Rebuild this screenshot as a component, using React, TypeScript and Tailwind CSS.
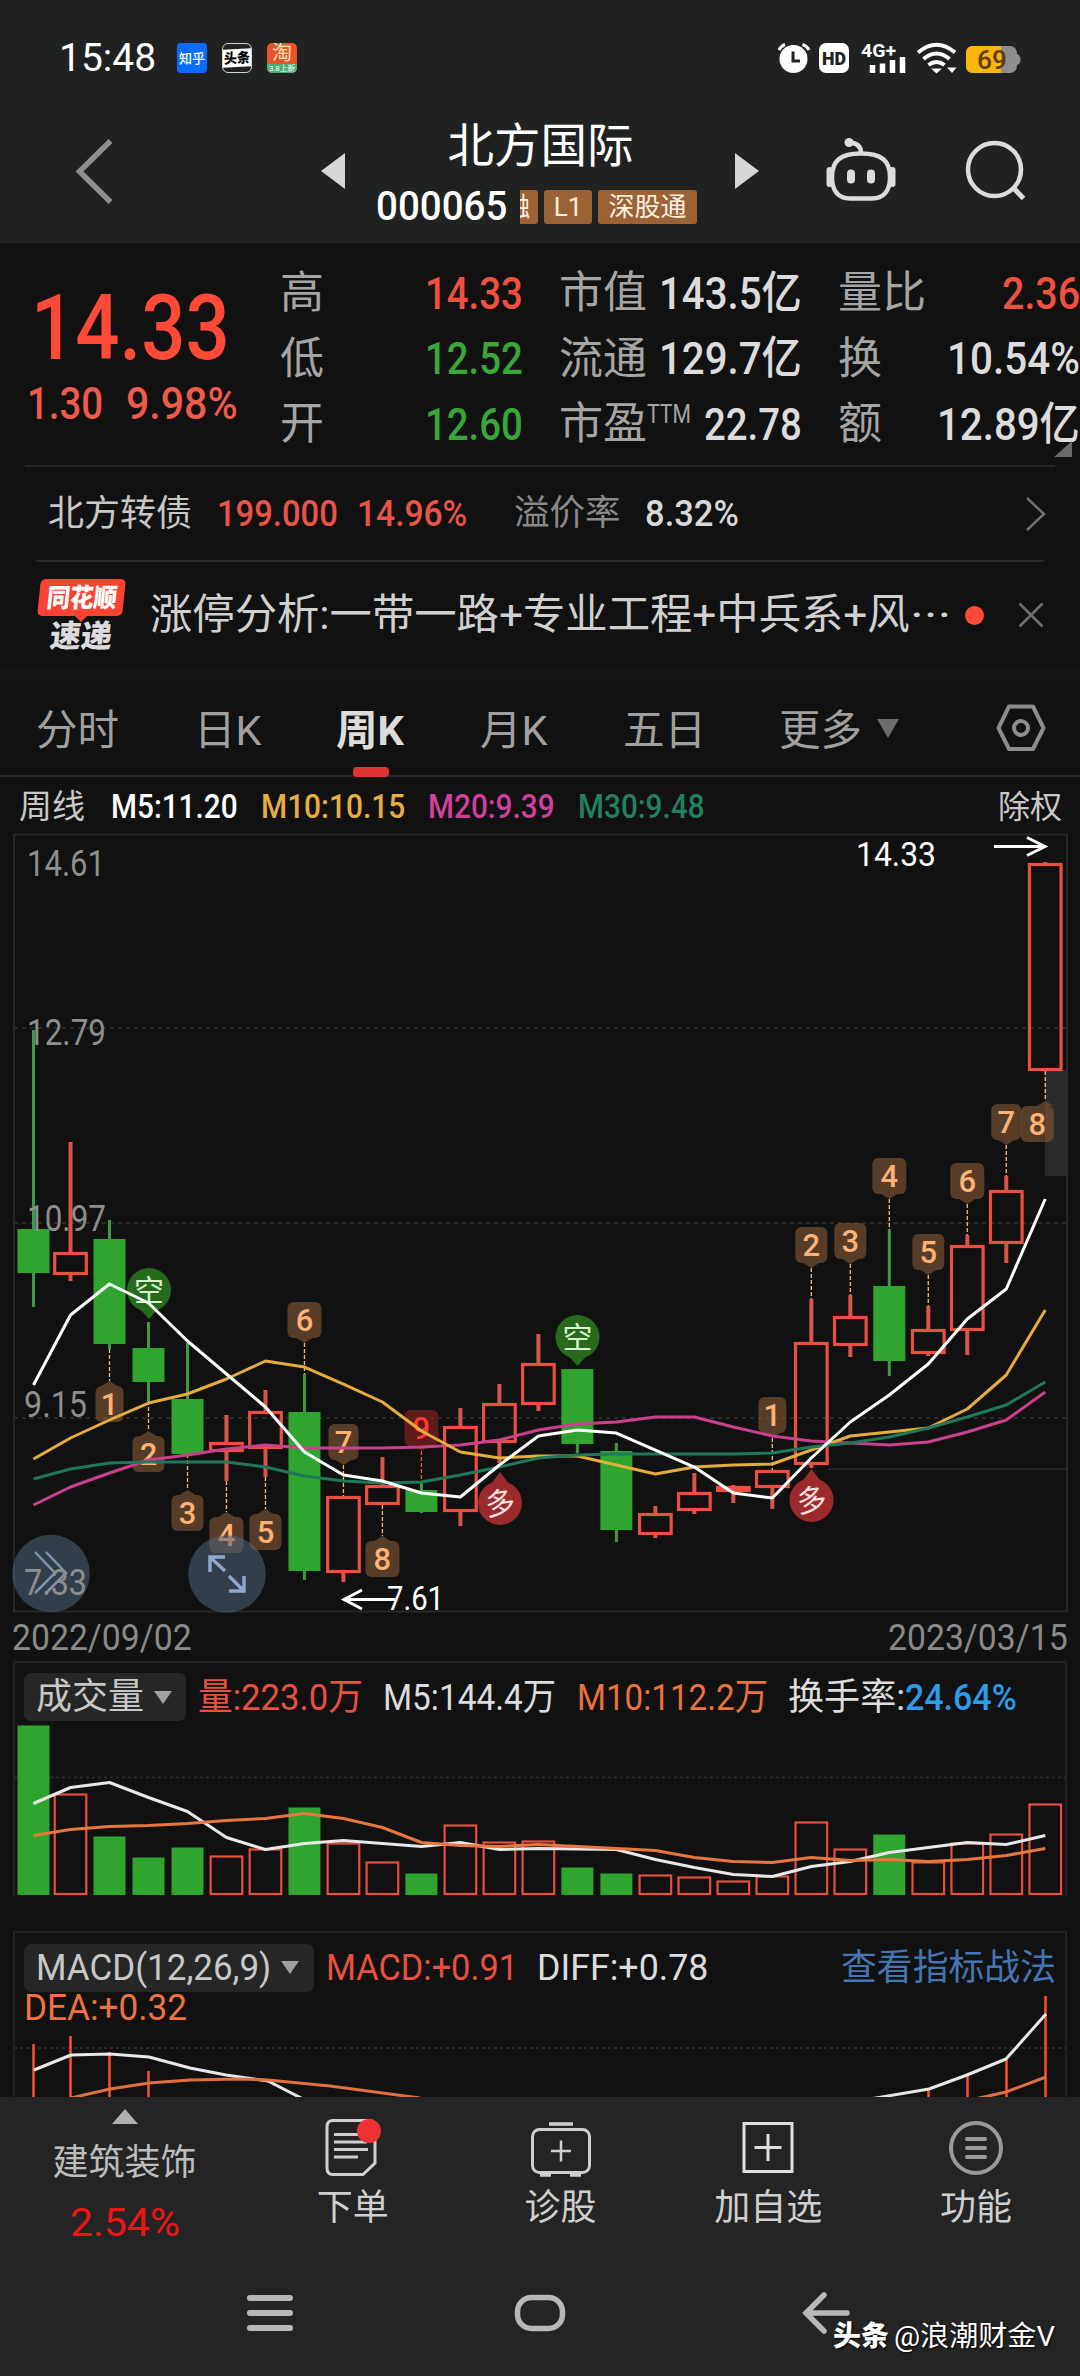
import { useLayoutEffect, useRef, type ReactNode } from 'react'

// Scales a single line of text horizontally so that it fills exactly `w` pixels
function Fit({ w, className = '', children }: { w: number; className?: string; children: ReactNode }) {
  const ref = useRef<HTMLSpanElement>(null)

  useLayoutEffect(() => {
    const el = ref.current
    if (!el) return
    el.style.transform = `scaleX(${w / el.offsetWidth})`
  }, [w, children])

  return (
    <span className={`inline-flex shrink-0 items-center ${className}`} style={{ width: w }}>
      <span ref={ref} className="inline-block origin-left whitespace-nowrap">
        {children}
      </span>
    </span>
  )
}

type Candle = { up: boolean; high: number; top: number; bottom: number; low: number; vol: number }

// [up, high, body top, body bottom, low, volume top]
const raw: [number, number, number, number, number, number][] = [
  [0, 1030, 1229, 1273, 1307, 1726],
  [1, 1142, 1252, 1275, 1281, 1794],
  [0, 1220, 1239, 1344, 1349, 1837],
  [0, 1322, 1348, 1382, 1401, 1858],
  [0, 1343, 1399, 1454, 1454, 1848],
  [1, 1415, 1442, 1452, 1481, 1856],
  [1, 1390, 1411, 1449, 1477, 1849],
  [0, 1374, 1412, 1571, 1580, 1808],
  [1, 1496, 1496, 1573, 1582, 1843],
  [1, 1457, 1485, 1505, 1505, 1862],
  [0, 1483, 1490, 1512, 1513, 1874],
  [1, 1408, 1426, 1512, 1526, 1825],
  [1, 1384, 1403, 1443, 1463, 1842],
  [1, 1334, 1363, 1405, 1411, 1841],
  [0, 1369, 1369, 1444, 1453, 1868],
  [0, 1443, 1451, 1530, 1542, 1874],
  [1, 1506, 1513, 1535, 1538, 1875],
  [1, 1473, 1492, 1511, 1514, 1877],
  [1, 1485, 1486, 1492, 1503, 1881],
  [1, 1470, 1470, 1488, 1509, 1876],
  [1, 1299, 1342, 1465, 1468, 1822],
  [1, 1295, 1316, 1346, 1357, 1849],
  [0, 1230, 1286, 1361, 1376, 1835],
  [1, 1306, 1329, 1354, 1356, 1862],
  [1, 1235, 1245, 1331, 1355, 1843],
  [1, 1176, 1190, 1244, 1263, 1834],
  [1, 862, 863, 1071, 1071, 1804],
]

const candles: Candle[] = raw.map(([up, high, top, bottom, low, vol]) => ({ up: up === 1, high, top, bottom, low, vol }))

const cx = (i: number) => (i === 0 ? 33.5 : 109.5 + 38.99 * (i - 2))

const line = (ys: number[]) => ys.map((y, i) => `${cx(i)},${y}`).join(' ')

const ma5 = [1385, 1315, 1284, 1303, 1341, 1374, 1407, 1452, 1475, 1481, 1493, 1497, 1465, 1436, 1430, 1433, 1450, 1467, 1493, 1498, 1458, 1422, 1395, 1364, 1319, 1289, 1199]
const ma10 = [1459, 1438, 1420, 1403, 1394, 1379, 1361, 1367, 1384, 1402, 1431, 1452, 1458, 1456, 1456, 1465, 1474, 1467, 1465, 1464, 1450, 1436, 1432, 1428, 1409, 1375, 1310]
const ma20 = [1505, 1487, 1473, 1460, 1455, 1449, 1445, 1448, 1448, 1448, 1447, 1445, 1440, 1430, 1424, 1422, 1417, 1417, 1427, 1436, 1441, 1443, 1445, 1442, 1432, 1420, 1392]
const ma30 = [1479, 1469, 1463, 1462, 1462, 1462, 1467, 1476, 1481, 1483, 1482, 1475, 1467, 1458, 1455, 1454, 1454, 1454, 1454, 1453, 1447, 1443, 1437, 1428, 1417, 1405, 1382]
const vol5 = [1804, 1788, 1783, 1798, 1812, 1838, 1850, 1844, 1841, 1844, 1847, 1843, 1850, 1849, 1849.5, 1850, 1860, 1868, 1875, 1877, 1867, 1862, 1853, 1848, 1843, 1845, 1836]
const vol10 = [1836, 1830, 1827, 1826, 1824, 1821, 1819, 1814, 1819, 1828, 1843, 1846, 1847, 1845, 1847, 1849, 1851, 1858, 1862, 1863, 1858, 1861, 1860, 1862, 1860, 1856, 1849]

type Badge = { n: string; i: number; y: number; wick: number; below?: boolean; w?: number; dx?: number; hot?: boolean }

const badges: Badge[] = [
  { n: '1', i: 2, y: 1386, wick: 1349, below: true, w: 28 },
  { n: '2', i: 3, y: 1436, wick: 1401, below: true },
  { n: '3', i: 4, y: 1495, wick: 1454, below: true },
  { n: '4', i: 5, y: 1517, wick: 1481, below: true, w: 34 },
  { n: '5', i: 6, y: 1514, wick: 1477, below: true },
  { n: '6', i: 7, y: 1302, wick: 1374, w: 34 },
  { n: '7', i: 8, y: 1424, wick: 1496, w: 30 },
  { n: '8', i: 9, y: 1541, wick: 1505, below: true, w: 34 },
  { n: '9', i: 10, y: 1410, wick: 1483, w: 34, hot: true },
  { n: '1', i: 19, y: 1397, wick: 1470, w: 28 },
  { n: '2', i: 20, y: 1227, wick: 1299 },
  { n: '3', i: 21, y: 1223, wick: 1295 },
  { n: '4', i: 22, y: 1158, wick: 1230, w: 34 },
  { n: '5', i: 23, y: 1234, wick: 1306 },
  { n: '6', i: 24, y: 1163, wick: 1235, w: 34 },
  { n: '7', i: 25, y: 1104, wick: 1176, w: 30 },
  { n: '8', i: 26, y: 1106, wick: 1071, below: true, w: 33, dx: -8 },
]

function CountBadge({ n, i, y, wick, below, w = 32, dx = 0, hot }: Badge) {
  const x = cx(i)
  const fill = hot ? '#8a2020' : '#7d5535'
  const tip = below
    ? `M${x - 8} ${y} L${x} ${y - 5} L${x + 8} ${y} Z`
    : `M${x - 8} ${y + 36} L${x} ${y + 41} L${x + 8} ${y + 36} Z`
  return (
    <g>
      <line x1={x} x2={x} y1={below ? wick : y + 41} y2={below ? y - 5 : wick} stroke={hot ? '#e0604a' : '#f2b98a'} strokeWidth="1.3" strokeDasharray="4 2" />
      <g fill={fill} opacity="0.65">
        <rect x={x + dx - w / 2} y={y} width={w} height={36} rx="6" />
        <path d={tip} />
      </g>
      <text x={x + dx} y={y + 29} textAnchor="middle" fontSize="31" fontWeight="500" fill={hot ? '#ff3b30' : '#ffb274'}>
        {n}
      </text>
    </g>
  )
}

function Signal({ x, y, long }: { x: number; y: number; long?: boolean }) {
  return (
    <g>
      <circle cx={x} cy={y} r="22" fill={long ? '#9b2a2d' : '#276a1e'} />
      <path
        d={long ? `M${x - 9} ${y - 19} L${x} ${y - 31} L${x + 9} ${y - 19} Z` : `M${x - 9} ${y + 19} L${x} ${y + 29} L${x + 9} ${y + 19} Z`}
        fill={long ? '#9b2a2d' : '#276a1e'}
      />
      {long ? (
        <text x={x} y={y + 11} textAnchor="middle" fontSize="30" fill="#ffe3e0" transform={`rotate(-8 ${x} ${y})`}>多</text>
      ) : (
        <text x={x} y={y + 11} textAnchor="middle" fontSize="30" fill="#d5f5cd">空</text>
      )}
    </g>
  )
}

function AxisLabel({ x, y, w, children }: { x: number; y: number; w: number; children: string }) {
  return (
    <text x={x} y={y} fontSize="36" fill="#8e8e8e" textLength={w} lengthAdjust="spacingAndGlyphs">
      {children}
    </text>
  )
}

function KLineChart() {
  return (
    <svg width="1080" height="782" viewBox="0 832 1080 782" className="block">
      <rect x="14" y="834.5" width="1053" height="777" fill="none" stroke="#272727" strokeWidth="2" />
      {[1028, 1223, 1418].map((y) => (
        <line key={y} x1="14" x2="1066" y1={y} y2={y} stroke="#2b2b2b" strokeWidth="2" strokeDasharray="4 4" />
      ))}
      <line x1="828" x2="1067" y1="1469" y2="1469" stroke="#2b2b2b" strokeWidth="1.5" />
      <rect x="1045" y="1070" width="22" height="106" fill="#2b2b2b" />

      {candles.map((c, i) => {
        const x = cx(i)
        const color = c.up ? '#ea4f42' : '#2fa52f'
        return (
          <g key={i}>
            <line x1={x} x2={x} y1={c.high} y2={c.top} stroke={c.up ? '#d9554a' : '#3f9a45'} strokeWidth={c.up ? 4 : 3} />
            <line x1={x} x2={x} y1={c.bottom} y2={c.low} stroke={c.up ? '#d9554a' : '#3f9a45'} strokeWidth={c.up ? 4 : 3} />
            {c.up ? (
              <rect x={x - 15.8} y={c.top + 1.5} width={31.6} height={Math.max(c.bottom - c.top - 3, 2)} fill="none" stroke={color} strokeWidth="3.2" />
            ) : (
              <rect x={x - 16} y={c.top} width={32} height={c.bottom - c.top} fill={color} />
            )}
          </g>
        )
      })}

      <AxisLabel x={27} y={876} w={78}>14.61</AxisLabel>
      <AxisLabel x={27} y={1045} w={79}>12.79</AxisLabel>
      <AxisLabel x={27} y={1231} w={79}>10.97</AxisLabel>
      <AxisLabel x={24} y={1417} w={63}>9.15</AxisLabel>

      {badges.map((b, i) => (
        <CountBadge key={i} {...b} />
      ))}
      <Signal x={149} y={1290} />
      <Signal x={577.5} y={1337} />
      <Signal x={500} y={1503} long />
      <Signal x={811.5} y={1500} long />

      <g fill="none" strokeWidth="3" strokeLinejoin="round">
        <polyline points={line(ma20)} stroke="#c9408f" />
        <polyline points={line(ma10)} stroke="#e3ac3d" />
        <polyline points={line(ma30)} stroke="#20785a" />
        <polyline points={line(ma5)} stroke="#ffffff" />
      </g>

      <text x="856" y="866" fontSize="33" fill="#fff" textLength="80" lengthAdjust="spacingAndGlyphs">14.33</text>
      <path d="M994 846.500H1045M1027 837.500L1045 846.500L1027 855.500" fill="none" stroke="#fff" strokeWidth="3" />
      <text x="387" y="1610" fontSize="33" fill="#fff" textLength="57" lengthAdjust="spacingAndGlyphs">7.61</text>
      <path d="M395 1599.500H344M362 1590L344 1599.500L362 1609" fill="none" stroke="#fff" strokeWidth="3" />

      <circle cx="51" cy="1573.500" r="38.800" fill="#4f647a" opacity="0.55" />
      <g fill="none" stroke="#8094ad" strokeWidth="2.500">
        <path d="M35 1552L55 1573L35 1593M46 1552L66 1573L46 1593" />
      </g>
      <AxisLabel x={24} y={1595} w={63}>7.33</AxisLabel>
      <circle cx="227" cy="1574" r="38.800" fill="#4f647a" opacity="0.55" />
      <path d="M225 1571L210 1557M210 1572V1557H225M229 1576L244 1591M244 1576V1591H229" fill="none" stroke="#8fa6cf" strokeWidth="3.500" />
    </svg>
  )
}

function VolumeChart() {
  return (
    <svg width="1054" height="173" viewBox="13 1723.500 1054 173" className="block">
      <line x1="14" x2="1066" y1="1778" y2="1778" stroke="#2b2b2b" strokeWidth="2" strokeDasharray="3 3" />
      {candles.map((c, i) =>
        c.up ? (
          <rect key={i} x={cx(i) - 15.8} y={c.vol + 1} width={31.6} height={1893.5 - c.vol} fill="none" stroke="#e5503f" strokeWidth="2.200" />
        ) : (
          <rect key={i} x={cx(i) - 16} y={c.vol} width={32} height={1895.5 - c.vol} fill="#2fa52f" />
        )
      )}
      <g fill="none" strokeWidth="3" strokeLinejoin="round">
        <polyline points={line(vol5)} stroke="#e8e8e8" />
        <polyline points={line(vol10)} stroke="#e8763f" />
      </g>
    </svg>
  )
}

const macdBars = [
  [33.5, 2044],
  [70.5, 2036],
  [109.5, 2052],
  [148.5, 2071],
  [928.5, 2090],
  [967.5, 2073],
  [1006.5, 2060],
  [1045.5, 1996],
]

function MacdChart() {
  return (
    <svg width="1080" height="103" viewBox="0 1994 1080 103" className="block">
      <path d="M14 1994V2097M1066 1994V2097" stroke="#222" strokeWidth="2" />
      <line x1="14" x2="1066" y1="2048" y2="2048" stroke="#2b2b2b" strokeWidth="2" strokeDasharray="3 3" />
      {macdBars.map(([x, y]) => (
        <line key={x} x1={x} x2={x} y1={y} y2="2098" stroke="#ff5030" strokeWidth="2.500" />
      ))}
      <g fill="none" strokeWidth="3" strokeLinejoin="round">
        <path d="M34 2070L71 2055L110 2054L149 2057L190 2068L226 2075L268 2081L303 2099" stroke="#e8e8e8" />
        <path d="M870 2099L929 2089L967 2075L1006 2059L1046 2014" stroke="#e8e8e8" />
        <path d="M71 2098L110 2089L149 2083L190 2080L240 2079L268 2080L330 2086L420 2098" stroke="#e07040" />
        <path d="M975 2099L1006 2092L1046 2077" stroke="#e07040" />
      </g>
      <text x="24" y="2020" fontSize="36" fill="#ee7340" textLength="163" lengthAdjust="spacingAndGlyphs">DEA:+0.32</text>
    </svg>
  )
}

function StatusBar() {
  return (
    <div className="flex h-[116px] items-center pl-[59px] text-white">
      <Fit w={97} className="text-[39px] leading-none">15:48</Fit>
      <div className="ml-[21px] flex h-[30px] w-[30px] items-center justify-center rounded-[4px] bg-[#0a6cff]">
        <Fit w={26} className="text-[13px] font-medium leading-none">知乎</Fit>
      </div>
      <div className="ml-[15px] flex h-[30px] w-[30px] items-center rounded-[6px] border border-gray-300 bg-[#222]">
        <div className="flex h-[18px] w-full -skew-y-3 items-center justify-center bg-white">
          <Fit w={26} className="text-[14px] font-black leading-none text-black">头条</Fit>
        </div>
      </div>
      <div className="ml-[15px] flex h-[30px] w-[30px] flex-col items-center overflow-hidden rounded-[5px] bg-[#e8532a]">
        <span className="h-[21px] text-[20px] leading-[21px] text-[#ffe2c0]">淘</span>
        <span className="flex h-[9px] w-full items-center justify-center bg-[#4cb07c]">
          <Fit w={26} className="text-[8px] leading-none">3.8上新</Fit>
        </span>
      </div>

      <svg width="245" height="34" viewBox="776 41 245 34" className="ml-[479px]">
        <circle cx="793.500" cy="59" r="14" fill="#fff" />
        <path d="M793 51.500V61H800" fill="none" stroke="#1f2221" strokeWidth="3" />
        <path d="M779 50Q781 46 785 44.500M809 50Q807 46 802.500 44.500" fill="none" stroke="#fff" strokeWidth="3" />
        <rect x="819" y="43" width="30" height="30" rx="7" fill="#fff" />
        <text x="834" y="64.500" textAnchor="middle" fontSize="18" fontWeight="900" fill="#1f2221" textLength="24" lengthAdjust="spacingAndGlyphs">HD</text>
        <text x="861" y="57" fontSize="18" fontWeight="700" fill="#fff" textLength="35" lengthAdjust="spacingAndGlyphs">4G+</text>
        <path d="M872.500 73V65M882.500 73V63.500M892.500 73V60M902.500 73V57" stroke="#fff" strokeWidth="5.500" />
        <g fill="none" stroke="#fff" strokeWidth="4">
          <path d="M918 52.500Q936.500 37 955 52.500" />
          <path d="M923.500 59Q936.500 48 949.500 59" />
          <path d="M928.500 65Q936.500 59 944.500 65" />
        </g>
        <path d="M931 68.500H942L936.500 73.500ZM947 67.500H956.500L952 73Z" fill="#fff" />
        <rect x="966" y="46" width="51" height="27" rx="7" fill="#8e8e8e" />
        <path d="M973 46H1001V73H973Q966 73 966 66V53Q966 46 973 46Z" fill="#fbb60a" />
        <path d="M1017 54Q1020.500 55 1020.500 59.500Q1020.500 64 1017 65Z" fill="#8e8e8e" />
        <text x="992" y="69" textAnchor="middle" fontSize="25" fontWeight="500" fill="#5d3d0e" textLength="30" lengthAdjust="spacingAndGlyphs">69</text>
      </svg>
    </div>
  )
}

function Header() {
  return (
    <header className="h-[243px] bg-[#1f2221]">
      <StatusBar />
      <div className="flex h-[127px]">
        <svg width="376" height="116" viewBox="0 116 376 116" className="shrink-0">
          <path d="M110.500 141L79.500 171.500L110.500 202" fill="none" stroke="#8f8f8f" strokeWidth="5.500" />
          <path d="M321 171L345 153V189Z" fill="#d6d6d6" />
        </svg>
        <div className="flex w-[332px] shrink-0 flex-col">
          <div className="flex h-[60px] items-center justify-center pr-[3px] text-[46.5px] leading-none text-white">北方国际</div>
          <div className="flex h-[62px] items-end pb-[14px]">
            <Fit w={131} className="h-[34px] text-[40px] font-medium leading-none text-white">000065</Fit>
            <div className="ml-[13px] flex h-[34px] items-center gap-[6px] text-[26px] leading-none text-[#fff1e0]">
              <span className="flex h-full w-[18px] items-center justify-end overflow-hidden rounded-r-[3px] bg-[#9a6235] pr-[8px]">融</span>
              <span className="flex h-full w-[48px] items-center justify-center rounded-[3px] bg-[#9a6235]">L1</span>
              <span className="flex h-full w-[99px] items-center justify-center rounded-[3px] bg-[#9a6235]">深股通</span>
            </div>
          </div>
        </div>
        <svg width="372" height="116" viewBox="708 116 372 116" className="shrink-0">
          <path d="M735 153L759 171L735 189Z" fill="#d6d6d6" />
          <g fill="none" stroke="#dcdcdc" strokeWidth="4.500">
            <path d="M861 153.500C882 153.500 890 161 890 177C890 192 883 198.500 872 198.500H850C839 198.500 832 192 832 177C832 161 840 153.500 861 153.500Z" />
            <path d="M861 153Q861 143 849 142.500" />
            <path d="M829.500 170V184M892.500 170V184" strokeWidth="6" strokeLinecap="round" />
            <path d="M851 173.500V179.500M871 173.500V179.500" strokeWidth="8" strokeLinecap="round" />
            <circle cx="994.500" cy="169.500" r="26.500" />
            <path d="M1012.500 187L1023.500 198.500" strokeWidth="5" />
          </g>
          <circle cx="849" cy="142.500" r="4.500" fill="#dcdcdc" />
        </svg>
      </div>
    </header>
  )
}

function Cell({ label, value, w, color = 'text-[#dcdcdc]' }: { label: ReactNode; value: string; w: number; color?: string }) {
  return (
    <div className="flex h-[65.5px] w-full items-center justify-between">
      <span className="text-[44px] leading-none text-[#a5a5a5]">{label}</span>
      <Fit w={w} className={`text-[45px] font-medium leading-none ${color}`}>{value}</Fit>
    </div>
  )
}

function Quote() {
  return (
    <section className="relative flex h-[222px] pt-[17.5px]">
      <div className="w-[280px] shrink-0 text-[#ff4a38]">
        <div className="flex h-[118px] items-center pl-[31px] pt-[19px]">
          <Fit w={199} className="text-[90px] font-medium leading-none">14.33</Fit>
        </div>
        <div className="flex h-[50px] items-center gap-[23px] pl-[27px] text-[#ee5a4b]">
          <Fit w={76} className="text-[44px] font-medium leading-none">1.30</Fit>
          <Fit w={112} className="text-[44px] font-medium leading-none">9.98%</Fit>
        </div>
      </div>
      <div className="w-[243px] shrink-0">
        <Cell label="高" value="14.33" w={98} color="text-[#f05040]" />
        <Cell label="低" value="12.52" w={98} color="text-[#3aa63a]" />
        <Cell label="开" value="12.60" w={98} color="text-[#3aa63a]" />
      </div>
      <div className="ml-[36px] w-[243px] shrink-0">
        <Cell label="市值" value="143.5亿" w={143} />
        <Cell label="流通" value="129.7亿" w={143} />
        <Cell
          label={
            <span className="flex items-start">
              市盈<Fit w={44} className="text-[25px] leading-none">TTM</Fit>
            </span>
          }
          value="22.78"
          w={98}
        />
      </div>
      <div className="ml-[36px] w-[242px] shrink-0">
        <Cell label="量比" value="2.36" w={78} color="text-[#f05040]" />
        <Cell label="换" value="10.54%" w={133} />
        <Cell label="额" value="12.89亿" w={143} />
      </div>
      <div className="absolute bottom-[8px] right-[8px] h-0 w-0 border-b-[16px] border-l-[18px] border-b-[#6a6a6a] border-l-transparent" />
    </section>
  )
}

function BondRow() {
  return (
    <section className="mx-[25px] flex h-[95px] items-center border-t-2 border-[#242424] pl-[23px] leading-none">
      <span className="text-[36px] text-[#c8c8c8]">北方转债</span>
      <Fit w={121} className="ml-[25px] text-[36px] font-medium text-[#e85548]">199.000</Fit>
      <Fit w={110} className="ml-[19px] text-[36px] font-medium text-[#e85548]">14.96%</Fit>
      <span className="ml-[47px] text-[35.5px] text-[#8a8a8a]">溢价率</span>
      <Fit w={94} className="ml-[24px] text-[36px] font-medium text-[#d8d8d8]">8.32%</Fit>
      <svg width="22" height="36" viewBox="0 0 22 36" className="ml-auto mr-[8px]">
        <path d="M2 2L19 18L2 34" fill="none" stroke="#707070" strokeWidth="2.500" />
      </svg>
    </section>
  )
}

function NewsRow() {
  return (
    <section className="mx-[36px] flex h-[108px] items-center border-t-2 border-[#2a2a2a]">
      <div className="flex w-[90px] shrink-0 flex-col items-center">
        <div className="flex h-[37px] w-[85px] -skew-x-6 items-center justify-center rounded-[5px] bg-[#fb4334]">
          <Fit w={70} className="text-[26px] font-black leading-none text-white">同花顺</Fit>
        </div>
        <div className="h-0 w-0 border-x-[6px] border-t-[6px] border-x-transparent border-t-[#fb4334]" />
        <span className="-skew-x-6 text-[31px] font-black leading-[29px] text-[#dcdcdc]">速递</span>
      </div>
      <Fit w={760} className="ml-[24px] text-[41.5px] leading-none text-[#d0d0d0]">涨停分析:一带一路+专业工程+中兵系+风</Fit>
      <Fit w={42} className="text-[41.5px] leading-none text-[#d0d0d0]">···</Fit>
      <span className="ml-[13px] h-[19px] w-[19px] shrink-0 rounded-full bg-[#ff4a38]" />
      <svg width="26" height="26" viewBox="0 0 26 26" className="ml-auto shrink-0">
        <path d="M1.500 1.500L24.500 24.500M24.500 1.500L1.500 24.500" stroke="#707070" strokeWidth="2.500" />
      </svg>
    </section>
  )
}

function Tabs() {
  return (
    <nav className="flex h-[97px] items-center border-b-2 border-[#2a2a2a] pl-[36px] pt-[7px] text-[41.5px] leading-none text-[#a0a0a0]">
      <span className="w-[158px]">分时</span>
      <span className="w-[142px]">日K</span>
      <span className="relative w-[144px] font-bold text-[#dcdcdc]">
        周K
        <span className="absolute -bottom-[25px] left-[17px] h-[10px] w-[36px] rounded-[4px] bg-[#df3434]" />
      </span>
      <span className="w-[143px]">月K</span>
      <span className="w-[156px]">五日</span>
      <span className="w-[98px]">更多</span>
      <span className="-mt-[6px] h-0 w-0 border-x-[11px] border-t-[19px] border-x-transparent border-t-[#6c6c6c]" />
      <svg width="50" height="48" viewBox="995 704 50 48" className="-mt-[6px] ml-[97px]">
        <path d="M1008 706.500H1032L1042.500 728L1032 749H1008L997.500 728Z" fill="none" stroke="#8c8c8c" strokeWidth="4" strokeLinejoin="round" />
        <circle cx="1020" cy="728" r="7" fill="none" stroke="#8c8c8c" strokeWidth="4" />
      </svg>
    </nav>
  )
}

function MaRow() {
  return (
    <div className="flex h-[55px] items-center pl-[19px] pt-[4px] text-[33px] leading-none">
      <span className="text-[#c8c8c8]">周线</span>
      <Fit w={127} className="ml-[26px] font-medium text-white">M5:11.20</Fit>
      <Fit w={144} className="ml-[23px] font-medium text-[#e6ad45]">M10:10.15</Fit>
      <Fit w={127} className="ml-[23px] font-medium text-[#d0409c]">M20:9.39</Fit>
      <Fit w={127} className="ml-[23px] font-medium text-[#22805f]">M30:9.48</Fit>
      <span className="ml-auto mr-[18px] text-[32px] text-[#c8c8c8]">除权</span>
    </div>
  )
}

function Picker({ w, textWidth, children }: { w: number; textWidth: number; children: ReactNode }) {
  return (
    <div className="flex h-[48px] shrink-0 items-center rounded-[7px] bg-[#262626] pl-[12px]" style={{ width: w }}>
      <Fit w={textWidth} className="text-[36px] text-[#c8c8c8]">{children}</Fit>
      <span className="ml-[10px] border-x-[9px] border-t-[13px] border-x-transparent border-t-[#a0a0a0]" />
    </div>
  )
}

function VolumePanel() {
  return (
    <section className="mx-[13px] h-[235px] border-2 border-b-0 border-[#222]">
      <div className="flex h-[60px] items-center pl-[9px] pt-[8px] text-[37px] leading-none">
        <Picker w={162} textWidth={108}>成交量</Picker>
        <Fit w={165} className="ml-[12px] text-[#e85040]">量:223.0万</Fit>
        <Fit w={173} className="ml-[20px] text-[#dcdcdc]">M5:144.4万</Fit>
        <Fit w={191} className="ml-[21px] text-[#e8733c]">M10:112.2万</Fit>
        <Fit w={117} className="ml-[20px] text-[#dcdcdc]">换手率:</Fit>
        <Fit w={112} className="font-medium text-[#2f9be8]">24.64%</Fit>
      </div>
      <div className="-ml-[2px]">
        <VolumeChart />
      </div>
    </section>
  )
}

function MacdPanel() {
  return (
    <section className="h-[166px]">
      <div className="mx-[13px] flex h-[63px] items-center border-2 border-b-0 border-[#222] pl-[9px] pt-[8px] text-[37px] leading-none">
        <Picker w={290} textWidth={235}>MACD(12,26,9)</Picker>
        <Fit w={192} className="ml-[12px] text-[#e85040]">MACD:+0.91</Fit>
        <Fit w={171} className="ml-[19px] text-[#dcdcdc]">DIFF:+0.78</Fit>
        <Fit w={215} className="ml-auto mr-[9px] text-[36px] text-[#4475b4]">查看指标战法</Fit>
      </div>
      <MacdChart />
    </section>
  )
}

function OrderIcon() {
  return (
    <svg width="62" height="62" viewBox="323 2117 62 62">
      <path d="M334 2120.500H370Q376 2120.500 376 2127V2163L364 2174.500H334Q328 2174.500 328 2168V2127Q328 2120.500 334 2120.500Z" fill="none" stroke="#cfcfcf" strokeWidth="3" />
      <path d="M335 2134.500H362M335 2142H368M335 2149.500H369M335 2157H359" stroke="#cfcfcf" strokeWidth="3" />
      <circle cx="370" cy="2131" r="12" fill="#ee3133" />
    </svg>
  )
}

function DiagnoseIcon() {
  return (
    <svg width="62" height="62" viewBox="529 2117 62 62">
      <rect x="531.500" y="2129.500" width="57" height="43" rx="7" fill="none" stroke="#cfcfcf" strokeWidth="3" />
      <path d="M548 2124H572M539 2175H550M569 2175H580" stroke="#cfcfcf" strokeWidth="3.500" />
      <path d="M550 2151H570M560 2140.500V2161.500" stroke="#cfcfcf" strokeWidth="2.500" />
    </svg>
  )
}

function AddIcon() {
  return (
    <svg width="62" height="62" viewBox="736.500 2117 62 62">
      <rect x="743.500" y="2123.500" width="48" height="48" fill="none" stroke="#dedede" strokeWidth="3" />
      <path d="M754 2147.500H781M767.500 2134V2161" stroke="#dedede" strokeWidth="3" />
    </svg>
  )
}

function FunctionIcon() {
  return (
    <svg width="62" height="62" viewBox="945 2117 62 62">
      <circle cx="976" cy="2148" r="25" fill="none" stroke="#9a9a9a" strokeWidth="4" />
      <path d="M967 2139H985M967 2148H985M967 2157H985" stroke="#9a9a9a" strokeWidth="4" strokeLinecap="round" />
    </svg>
  )
}

function Action({ icon, label }: { icon: ReactNode; label: string }) {
  return (
    <div className="flex w-[207.7px] shrink-0 flex-col items-center pt-[20px]">
      {icon}
      <span className="mt-[10px] text-[36px] leading-[38px] text-[#cfcfcf]">{label}</span>
    </div>
  )
}

function BottomBar() {
  return (
    <footer className="h-[279px] bg-[#242424]">
      <div className="flex h-[166px]">
        <div className="flex w-[249px] shrink-0 flex-col items-center pt-[12px]">
          <span className="border-x-[13px] border-b-[15px] border-x-transparent border-b-[#b0b0b0]" />
          <span className="mt-[20px] text-[36px] leading-[38px] text-[#bdbdbd]">建筑装饰</span>
          <Fit w={110} className="mt-[22px] text-[38px] leading-[38px] text-[#f01414]">2.54%</Fit>
        </div>
        <Action icon={<OrderIcon />} label="下单" />
        <Action icon={<DiagnoseIcon />} label="诊股" />
        <Action icon={<AddIcon />} label="加自选" />
        <Action icon={<FunctionIcon />} label="功能" />
      </div>
      <div className="relative h-[113px]">
        <svg width="1080" height="113" viewBox="0 2263 1080 113" className="block">
          <path d="M250 2298H290M250 2313H290M250 2328H290" stroke="#b8b8b8" strokeWidth="6" strokeLinecap="round" />
          <rect x="517.500" y="2297.500" width="45" height="31" rx="14" fill="none" stroke="#b8b8b8" strokeWidth="5.500" />
          <path d="M847 2313H807M824 2295L806 2313L824 2331" fill="none" stroke="#b8b8b8" strokeWidth="5.500" strokeLinecap="round" />
        </svg>
        <div className="absolute left-[833px] top-[60px] flex items-center text-[28px] leading-none text-white [text-shadow:1px_1px_2px_#000]">
          <Fit w={56} className="font-black">头条</Fit>
          <Fit w={161} className="ml-[5px]">@浪潮财金V</Fit>
        </div>
      </div>
    </footer>
  )
}

export default function App() {
  return (
    <div className="h-[2376px] w-[1080px] overflow-hidden bg-[#111] font-[Roboto,'Noto_Sans_CJK_SC',sans-serif]">
      <Header />
      <Quote />
      <BondRow />
      <NewsRow />
      <div className="h-[12px] bg-[#161616]" />
      <Tabs />
      <MaRow />
      <KLineChart />
      <div className="flex h-[47px] items-center justify-between px-[12px] text-[36px] leading-none text-[#8a8a8a]">
        <Fit w={180}>2022/09/02</Fit>
        <Fit w={180}>2023/03/15</Fit>
      </div>
      <VolumePanel />
      <div className="h-[35px]" />
      <MacdPanel />
      <BottomBar />
    </div>
  )
}
